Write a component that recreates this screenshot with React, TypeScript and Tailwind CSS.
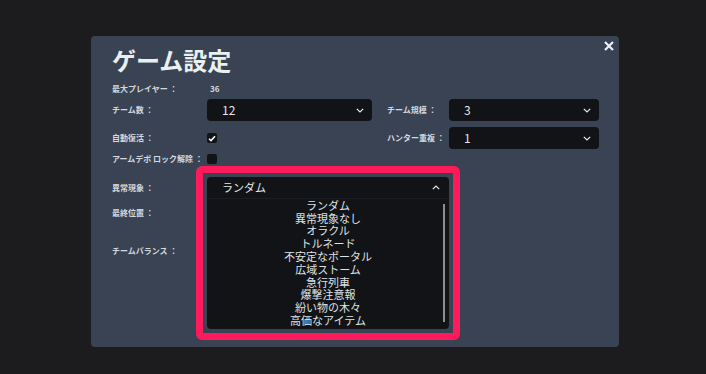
import React from "react";

const font = { fontFamily: '"Noto Sans CJK JP", "Noto Sans", sans-serif' };

const Chevron: React.FC<{ up?: boolean }> = ({ up }) => (
  <svg width="8" height="5" viewBox="0 0 8 5" className={up ? "rotate-180" : ""}>
    <path d="M0.8 0.8 L4 4 L7.2 0.8" fill="none" stroke="#e8ecef" strokeWidth="1.2" />
  </svg>
);

const Select: React.FC<{ value: string; w: string }> = ({ value, w }) => (
  <div className={`${w} h-[22px] bg-[#111316] rounded-[4px] pl-[15px] pr-[8px] flex items-center justify-between`}>
    <span className="text-[12px] text-[#e4e8ec]">{value}</span>
    <Chevron />
  </div>
);

const Label: React.FC<{ text: string; w?: string }> = ({ text, w = "w-[95px]" }) => (
  <div className={`${w} shrink-0 text-[8px] font-bold text-[#d3d8de] leading-none`}>{text}</div>
);

const items = [
  "ランダム",
  "異常現象なし",
  "オラクル",
  "トルネード",
  "不安定なポータル",
  "広域ストーム",
  "急行列車",
  "爆撃注意報",
  "紛い物の木々",
  "高価なアイテム",
];

export default function App() {
  return (
    <div style={font} className="w-[706px] h-[374px] bg-[#1c1c1e] pt-[36px] pl-[91px] overflow-hidden">
      <div className="relative w-[528px] h-[311px] bg-[#3a4354] rounded-[4px] pl-[21px] pt-[10px]">
        <button className="absolute top-[4px] right-[4px] w-[12px] h-[12px] flex items-center justify-center">
          <svg width="10" height="10" viewBox="0 0 10 10">
            <path d="M1 1 L9 9 M9 1 L1 9" stroke="#eaf2f2" strokeWidth="2.2" />
          </svg>
        </button>

        <h1 className="h-[28px] leading-[28px] text-[24px] font-bold text-[#e8f0f0]">ゲーム設定</h1>

        <div className="mt-[5px] h-[20px] flex items-center">
          <Label text="最大プレイヤー ：" />
          <span className="pl-[3px] text-[8px] font-bold text-[#d3d8de]">36</span>
        </div>

        <div className="h-[22px] flex items-center">
          <Label text="チーム数 ：" />
          <Select value="12" w="w-[165px]" />
          <div className="w-[15px]" />
          <Label text="チーム規模 ：" w="w-[62px]" />
          <Select value="3" w="w-[150px]" />
        </div>

        <div className="mt-[6px] h-[22px] flex items-center">
          <Label text="自動復活 ：" />
          <div className="w-[165px]">
            <div className="w-[10px] h-[10px] bg-[#111316] rounded-[2px] flex items-center justify-center">
              <svg width="8" height="7" viewBox="0 0 8 7">
                <path d="M1 3.8 L3 5.6 L7 1.2" fill="none" stroke="#ffffff" strokeWidth="1.5" />
              </svg>
            </div>
          </div>
          <div className="w-[15px]" />
          <Label text="ハンター重複 ：" w="w-[62px]" />
          <Select value="1" w="w-[150px]" />
        </div>

        <div className="h-[20px] flex items-center">
          <Label text="アームデボ ロック解除 ：" />
          <div className="w-[10px] h-[10px] bg-[#111316] rounded-[2px]" />
        </div>

        <div className="mt-[8px] flex">
          <div className="w-[95px] flex flex-col">
            <div className="h-[22px] flex items-center"><Label text="異常現象 ：" /></div>
            <div className="mt-[3px] h-[22px] flex items-center"><Label text="最終位置 ：" /></div>
            <div className="mt-[16px] h-[22px] flex items-center"><Label text="チームバランス ：" /></div>
          </div>

          {/* pink highlight around the open dropdown */}
          <div className="-m-[11px] p-[4px] border-[7px] border-[#ff1a5c] rounded-[6px]">
            <div className="w-[242px] h-[152px] bg-[#111316] rounded-[4px] flex flex-col">
              <div className="h-[22px] shrink-0 pl-[15px] pr-[9px] flex items-center justify-between border-b border-[#1a1d21]">
                <span className="text-[11px] text-[#e4e8ec]">ランダム</span>
                <Chevron up />
              </div>
              <div className="relative flex-1">
                <ul className="flex flex-col items-center">
                  {items.map((it) => (
                    <li key={it} className="h-[12.8px] flex items-center text-[11px] leading-none text-[#dfe3e7]">{it}</li>
                  ))}
                </ul>
                <div className="absolute right-[4px] top-[5px] w-[2px] h-[118px] bg-[#8c8e91]" />
              </div>
            </div>
          </div>
        </div>
      </div>
    </div>
  );
}
